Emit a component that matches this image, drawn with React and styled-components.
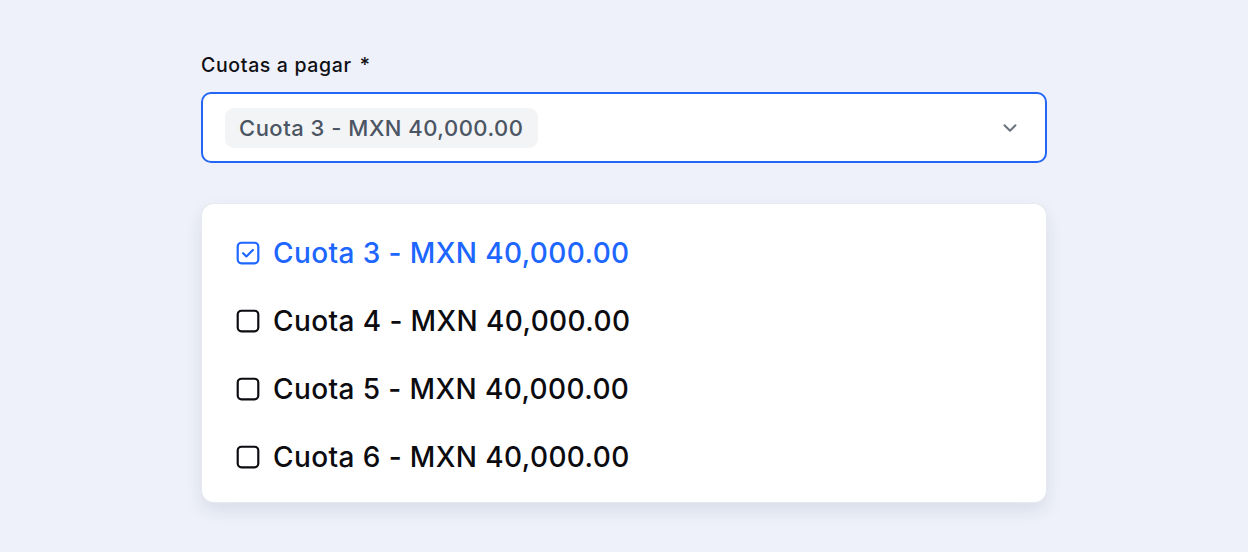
import React, { useState } from "react";
import styled, { createGlobalStyle } from "styled-components";

const GlobalStyle = createGlobalStyle`
  html, body {
    margin: 0;
    padding: 0;
    background: #eef1f9;
    font-family: "Inter", "Noto Sans", sans-serif;
  }
`;

const Page = styled.div`
  width: 1248px;
  height: 552px;
  background: #eef1f9;
  padding: 52px 0 0 201px;
  box-sizing: border-box;
`;

const Field = styled.div`
  width: 846px;
  display: flex;
  flex-direction: column;
`;

const Label = styled.label`
  font-size: 19.5px;
  font-weight: 500;
  color: #0f0f14;
  letter-spacing: 0.65px;
  line-height: 26px;
  margin-bottom: 14px;
  span {
    margin-left: 8px;
  }
`;

const Select = styled.div`
  height: 71px;
  box-sizing: border-box;
  border: 2px solid #2366f5;
  border-radius: 10px;
  background: #fff;
  display: flex;
  align-items: center;
  justify-content: space-between;
  padding: 0 24px 0 22px;
`;

const Chip = styled.div`
  height: 40px;
  padding: 0 15px 0 14px;
  display: flex;
  align-items: center;
  background: #f3f4f6;
  border-radius: 9px;
  font-size: 22px;
  font-weight: 500;
  color: #4b5563;
  letter-spacing: 0.5px;
`;

const Chevron = styled.svg`
  width: 22px;
  height: 22px;
  color: #6b7280;
`;

const Menu = styled.ul`
  list-style: none;
  margin: 41px 0 0 1px;
  width: 844px;
  height: 298px;
  box-sizing: border-box;
  padding: 15px 0 0 33px;
  background: #fff;
  border-radius: 12px;
  box-shadow: 0 0 0 1px #e7e9ef, 0 8px 18px rgba(30, 40, 80, 0.1);
`;

const Option = styled.li`
  height: 68px;
  display: flex;
  align-items: center;
  gap: 12px;
  font-size: 28px;
  font-weight: 500;
  letter-spacing: 0.4px;
  color: ${(p) => (p.$checked ? "#1d66ff" : "#0b0b10")};
  cursor: pointer;
`;

const Box = styled.svg`
  width: 26px;
  height: 26px;
  flex-shrink: 0;
`;

const CheckBox = ({ checked }) => (
  <Box viewBox="0 0 24 24" fill="none" stroke="currentColor" strokeWidth="2">
    <rect x="2.5" y="2.5" width="19" height="19" rx="3.5" />
    {checked && <path d="M7.5 12.2l3 3 6-6" strokeLinecap="round" strokeLinejoin="round" />}
  </Box>
);

const options = [3, 4, 5, 6];

export default function App() {
  const [selected, setSelected] = useState([3]);
  const toggle = (n) =>
    setSelected((s) => (s.includes(n) ? s.filter((x) => x !== n) : [...s, n]));

  return (
    <>
      <GlobalStyle />
      <Page>
        <Field>
          <Label>
            Cuotas a pagar<span>*</span>
          </Label>
          <Select>
            <Chip>Cuota 3 - MXN 40,000.00</Chip>
            <Chevron viewBox="0 0 24 24" fill="none" stroke="currentColor" strokeWidth="2.2" strokeLinecap="round" strokeLinejoin="round">
              <path d="M6 9l6 6 6-6" />
            </Chevron>
          </Select>
          <Menu>
            {options.map((n) => (
              <Option key={n} $checked={selected.includes(n)} onClick={() => toggle(n)}>
                <CheckBox checked={selected.includes(n)} />
                Cuota {n} - MXN 40,000.00
              </Option>
            ))}
          </Menu>
        </Field>
      </Page>
    </>
  );
}
